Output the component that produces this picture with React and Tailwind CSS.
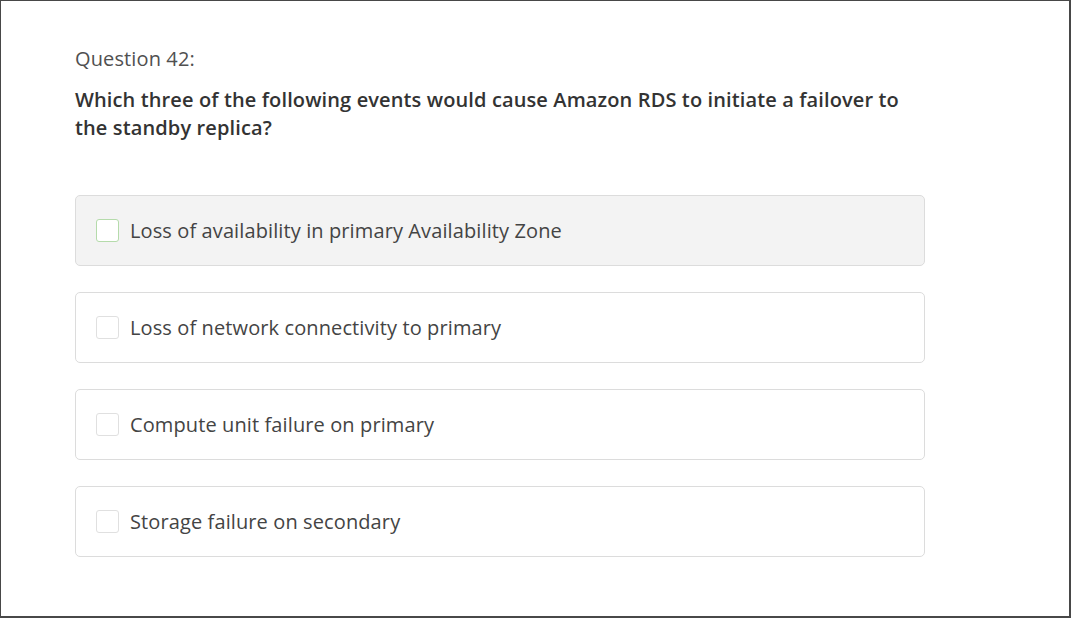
const options = [
  { text: "Loss of availability in primary Availability Zone", hover: true },
  { text: "Loss of network connectivity to primary" },
  { text: "Compute unit failure on primary" },
  { text: "Storage failure on secondary" },
];

function Option({ text, hover }) {
  return (
    <label
      className={`flex items-center h-[71px] px-5 rounded-[5px] border border-[#dcdcdc] cursor-pointer ${
        hover ? "bg-[#f3f3f3]" : "bg-white"
      }`}
    >
      <span
        className={`w-[23px] h-[23px] shrink-0 rounded-[3px] bg-white border ${
          hover ? "border-[#b5dbab]" : "border-[#e0e0e0]"
        }`}
      />
      <span className="ml-[11px] text-[20px] tracking-[0.11px] text-[#444]">{text}</span>
    </label>
  );
}

export default function App() {
  return (
    <div
      className="w-[1071px] h-[618px] bg-white border-t border-l border-r-2 border-b-2 border-[#484848] overflow-hidden"
      style={{ fontFamily: '"Open Sans", "Noto Sans", sans-serif' }}
    >
      <div className="pl-[74px] pt-[44px] w-[924px]">
        <div className="text-[20px] leading-[28px] tracking-[0.12px] text-[#505050]">Question 42:</div>
        <h2 className="mt-[13px] text-[20px] leading-[28px] tracking-[0.12px] font-semibold text-[#333]">
          Which three of the following events would cause Amazon RDS to initiate a failover to the standby replica?
        </h2>
        <div className="mt-[53px] flex flex-col gap-[26px]">
          {options.map((o) => (
            <Option key={o.text} {...o} />
          ))}
        </div>
      </div>
    </div>
  );
}
